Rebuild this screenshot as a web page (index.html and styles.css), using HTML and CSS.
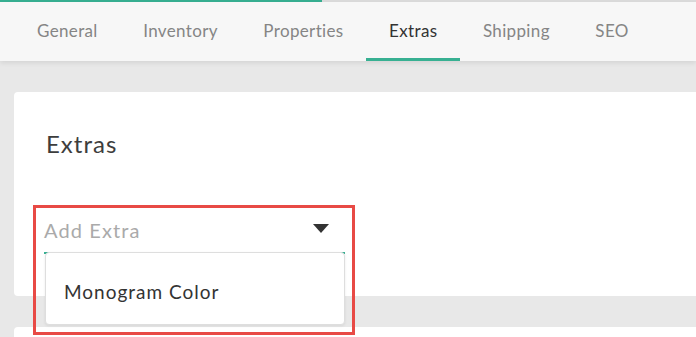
FILE: index.html
```html
<!DOCTYPE html>
<html lang="en">
<head>
<meta charset="utf-8">
<title>Extras</title>
<link rel="stylesheet" href="styles.css">
</head>
<body>
<div class="progress"><div class="progress-fill"></div></div>
<nav class="tabs">
  <a class="tab">General</a>
  <a class="tab">Inventory</a>
  <a class="tab">Properties</a>
  <a class="tab active">Extras</a>
  <a class="tab">Shipping</a>
  <a class="tab">SEO</a>
</nav>
<main class="content">
  <section class="card">
    <h2 class="card-title">Extras</h2>
    <div class="select-wrap">
      <div class="select">
        <span class="placeholder">Add Extra</span>
        <svg class="caret" width="16" height="9" viewBox="0 0 16 9"><path d="M0 0H16L8 9Z" fill="#333"/></svg>
      </div>
      <ul class="dropdown">
        <li class="option">Monogram Color</li>
      </ul>
      <div class="highlight"></div>
    </div>
  </section>
  <section class="card card-next"></section>
</main>
</body>
</html>
```
FILE: styles.css
```css
* { box-sizing: border-box; }
html, body { margin: 0; padding: 0; }
body {
  background: #e8e8e8;
  font-family: "Lato", "Open Sans", sans-serif;
  width: 696px;
  height: 337px;
  overflow: hidden;
}
.progress {
  height: 2px;
  background: #dcdcdc;
}
.progress-fill {
  width: 322px;
  height: 2px;
  background: #37b092;
}
.tabs {
  display: flex;
  height: 59px;
  padding-left: 14px;
  background: #f7f7f7;
  box-shadow: 0 2px 5px rgba(0, 0, 0, 0.09);
  position: relative;
}
.tab {
  padding: 0 22.5px 0 23px;
  line-height: 57px;
  font-size: 17px;
  letter-spacing: 0.35px;
  color: #858585;
  border-bottom: 3px solid transparent;
}
.tab.active {
  color: #333;
  border-bottom-color: #37b092;
}
.content {
  padding: 31px 0 0 14px;
}
.card {
  background: #fff;
  border-radius: 4px 0 0 4px;
  height: 204px;
  padding: 37px 0 0 30px;
}
.card-title {
  margin: 0 0 0 2px;
  font-weight: 400;
  font-size: 24px;
  letter-spacing: 1px;
  line-height: 30px;
  color: #3d3d3d;
}
.select-wrap {
  position: relative;
  margin-top: 53px;
  width: 301px;
}
.select {
  display: flex;
  align-items: center;
  justify-content: space-between;
  height: 42px;
  padding: 0 16px 4px 0;
  border-bottom: 2px solid #37b092;
}
.placeholder {
  font-size: 20px;
  letter-spacing: 1.1px;
  color: #aaa;
}
.caret { display: block; margin-top: -4px; }
.dropdown {
  position: absolute;
  left: 1px;
  top: 40px;
  right: 0;
  margin: 0;
  padding: 0;
  list-style: none;
  background: #fff;
  border: 1px solid #dedede;
  border-radius: 4px;
  box-shadow: 0 1px 3px rgba(0, 0, 0, 0.08);
  height: 73px;
}
.option {
  padding: 26px 18px 0;
  line-height: 26px;
  font-size: 19px;
  letter-spacing: 1px;
  color: #333;
}
.highlight {
  position: absolute;
  left: -11px;
  top: -7px;
  width: 322px;
  height: 130px;
  border: 3px solid #e84a45;
}
.card-next {
  margin-top: 31px;
  height: 10px;
}
```
